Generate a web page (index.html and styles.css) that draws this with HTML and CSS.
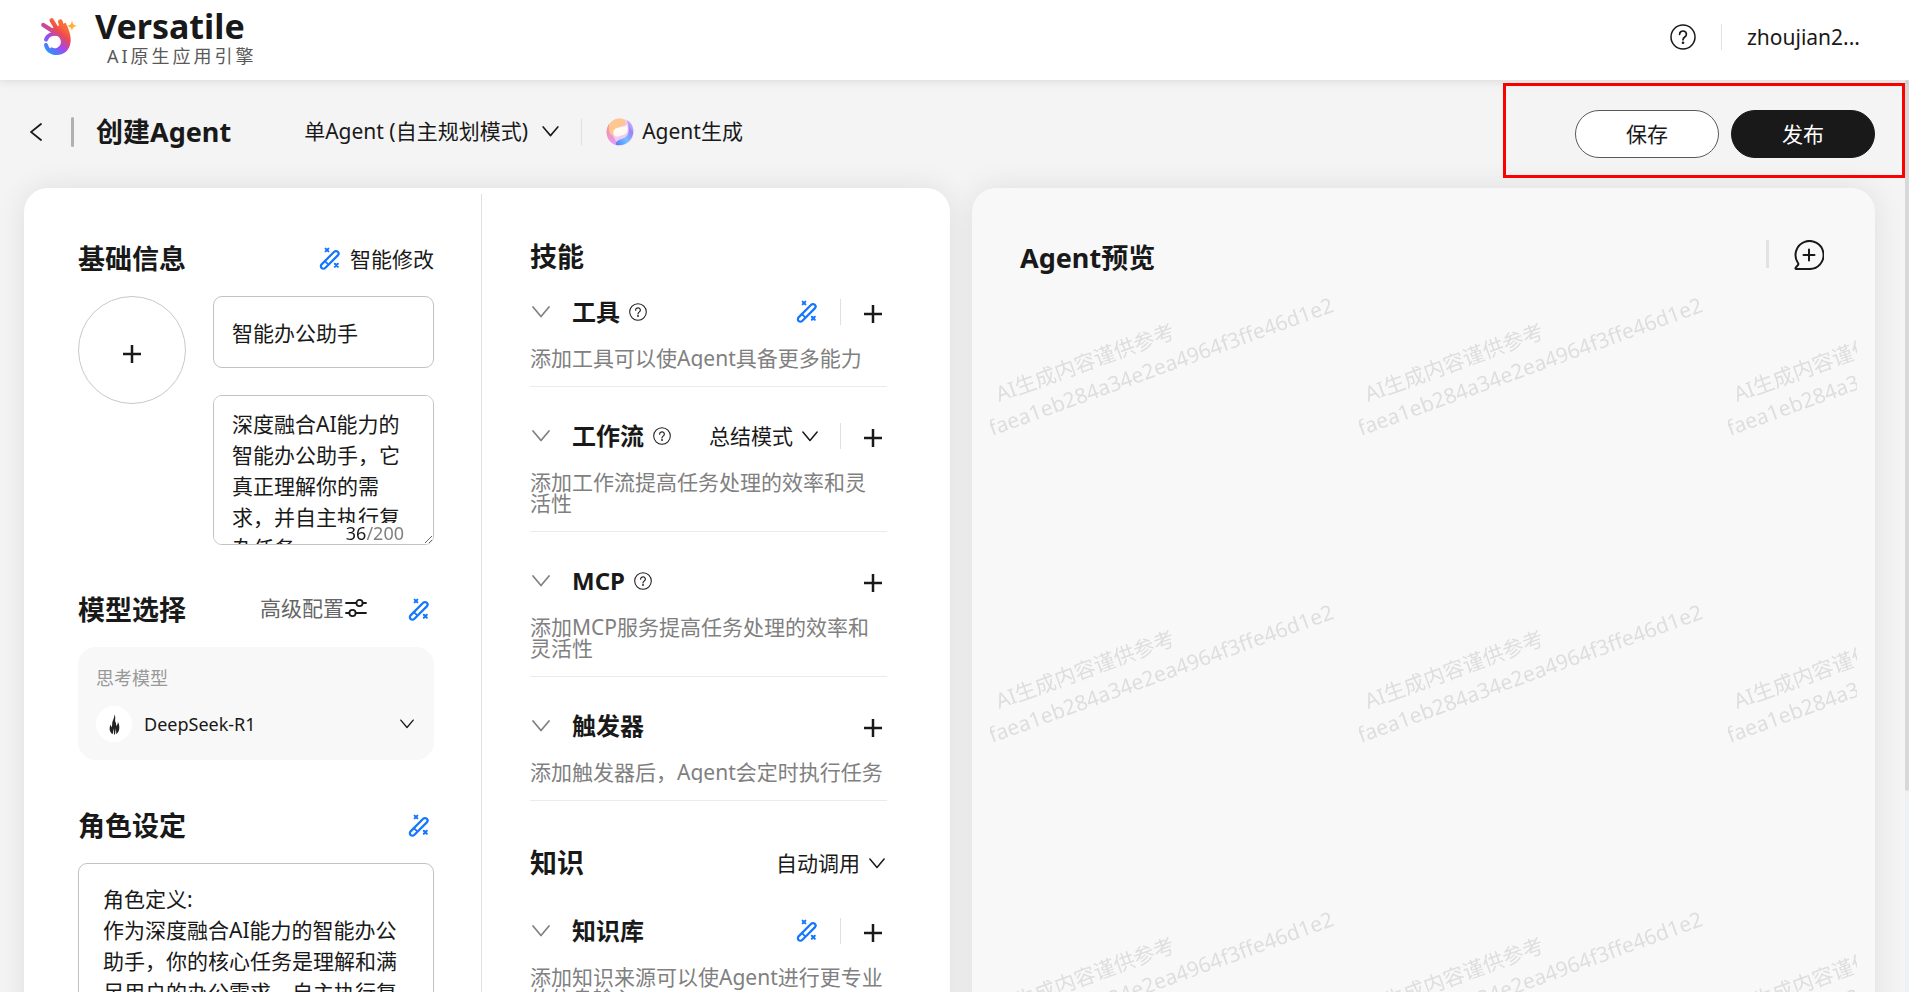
FILE: index.html
```html
<!DOCTYPE html>
<html lang="zh-CN">
<head>
    <meta charset="UTF-8">
    <meta name="viewport" content="width=device-width, initial-scale=1.0">
    <title>Versatile - 创建Agent</title>
    <link rel="stylesheet" href="styles.css">
</head>
<body>
    <!-- Iconos compartidos -->
    <svg class="sprite" aria-hidden="true">
        <symbol id="icon-wand" viewBox="0 0 22 24">
            <g fill="none" stroke="currentColor" stroke-linecap="round">
                <path d="M2.6 17.4 15.2 4.8a2.5 2.5 0 0 1 3.6 3.6L6.2 21a2.5 2.5 0 0 1-3.6-3.6z" stroke-width="2.2"/>
                <path d="M6.4 14.6 9 17.2" stroke-width="1.8"/>
                <path d="M6.6 1.6l2.8 2.8M9.4 1.6 6.6 4.4M15.8 16.8l3 3M18.8 16.8l-3 3" stroke-width="2"/>
            </g>
        </symbol>
        <symbol id="icon-help" viewBox="0 0 26 26">
            <circle cx="13" cy="13" r="12" fill="none" stroke="currentColor" stroke-width="1.5"/>
            <path d="M9.6 10.4a3.4 3.2 0 1 1 5.4 2.4c-1.2.9-2 1.5-2 3" fill="none" stroke="currentColor" stroke-width="1.7" stroke-linecap="round"/>
            <circle cx="13" cy="18.8" r="1.3" fill="currentColor"/>
        </symbol>
        <symbol id="icon-down" viewBox="0 0 18 12">
            <path d="M1 1l8 9.5L17 1" fill="none" stroke="currentColor" stroke-width="1.7" stroke-linecap="round" stroke-linejoin="round"/>
        </symbol>
        <symbol id="icon-plus" viewBox="0 0 20 20">
            <path d="M10 1v18M1 10h18" stroke="currentColor" stroke-width="2.5"/>
        </symbol>
    </svg>

    <header class="header">
        <div class="brand">
            <svg class="brand-logo" viewBox="0 0 150 150" aria-hidden="true">
                <defs>
                    <linearGradient id="hand" gradientUnits="userSpaceOnUse" x1="30" y1="118" x2="88" y2="50">
                        <stop offset="0" stop-color="#1e9bff"/>
                        <stop offset=".42" stop-color="#a347f0"/>
                        <stop offset=".78" stop-color="#ec4a50"/>
                        <stop offset="1" stop-color="#fb6c35"/>
                    </linearGradient>
                    <linearGradient id="star" x1="0" y1="0" x2="1" y2="1">
                        <stop offset="0" stop-color="#ff9a3c"/>
                        <stop offset="1" stop-color="#ffc933"/>
                    </linearGradient>
                </defs>
                <g fill="none" stroke="url(#hand)" stroke-linecap="round">
                    <path d="M28 45 58 64" stroke-width="13"/>
                    <path d="M53 31 72 62" stroke-width="13"/>
                    <path d="M79 35 88 66" stroke-width="14"/>
                    <path d="M36 89C40 76 54 68 72 72" stroke-width="12"/>
                    <path d="M36 105C40 122 54 129 68 128" stroke-width="12"/>
                </g>
                <path fill="url(#hand)" d="M48 58 60 52 82 44 95 38C103 55 111 72 110 92 109 118 92 135 68 135 54 135 46 130 41 123L52 112A19 19 0 1 0 58 77L50 74C54 68 60 68 62 67Z"/>
                <path fill="url(#star)" d="M114 31C116 43 119 46 130 48 119 50 116 53 114 64 112 53 109 50 98 48 109 46 112 43 114 31Z"/>
            </svg>
            <div class="brand-text">
                <strong>Versatile</strong>
                <span>AI原生应用引擎</span>
            </div>
        </div>
        <div class="header-right">
            <button class="icon-btn" aria-label="帮助"><svg class="icon-26"><use href="#icon-help"/></svg></button>
            <span class="separator"></span>
            <a class="user" href="#">zhoujian2...</a>
        </div>
    </header>

    <div class="wrapper">
        <div class="page">
            <div class="toolbar">
                <div class="toolbar-left">
                    <button class="icon-btn back" aria-label="返回">
                        <svg viewBox="0 0 12 18"><path d="M11 1 1 9l10 8" fill="none" stroke="currentColor" stroke-width="1.8" stroke-linecap="round"/></svg>
                    </button>
                    <span class="title-bar"></span>
                    <h1>创建Agent</h1>
                    <div class="picker mode">
                        <select aria-label="模式"><option>单Agent (自主规划模式)</option></select>
                        <svg class="icon-down wide"><use href="#icon-down"/></svg>
                    </div>
                    <span class="separator"></span>
                    <button class="generate">
                        <svg viewBox="0 0 28 28" aria-hidden="true">
                            <defs>
                                <linearGradient id="orb-left" x1="0" y1="0" x2="0" y2="1">
                                    <stop offset="0" stop-color="#fb8a8f"/>
                                    <stop offset="1" stop-color="#e69df8"/>
                                </linearGradient>
                                <linearGradient id="orb-right" x1="0" y1="1" x2="1" y2="0">
                                    <stop offset="0" stop-color="#4f7dff"/>
                                    <stop offset=".4" stop-color="#6cc3ff"/>
                                    <stop offset=".7" stop-color="#9a83f8"/>
                                    <stop offset="1" stop-color="#e3dcfb"/>
                                </linearGradient>
                            </defs>
                            <circle cx="14" cy="14" r="13.5" fill="#f3c8f4"/>
                            <path d="M3 6C-2 14 1 24 10 27c2-3-1-5-3-9-2-4-3-8-4-12z" fill="url(#orb-left)"/>
                            <path d="M21 2c6 3 8 11 5 17-3 6-9 9-16 8-1-4 3-5 8-7 5-2 6-8 3-18z" fill="url(#orb-right)"/>
                            <path d="M3 7C8-1 17-1 20 4c1 4-5 4-8 6-4 2-3 7-6 7-2 0-4-5-3-10z" fill="#fdc78f"/>
                            <path d="M8 12c3-4 9-2 13-5 2 5 0 9-4 10-4 1-7 3-9 0-1-2-1-4 0-5z" fill="#fffaf4"/>
                        </svg>
                        Agent生成
                    </button>
                </div>
                <div class="toolbar-actions">
                    <button class="pill">保存</button>
                    <button class="pill pill-dark">发布</button>
                </div>
                <div class="highlight"></div>
            </div>

            <main class="content">
                <section class="card editor">
                    <div class="column settings">
                        <div class="section-head">
                            <h2>基础信息</h2>
                            <button class="text-btn"><svg class="wand"><use href="#icon-wand"/></svg>智能修改</button>
                        </div>
                        <div class="basic">
                            <button class="avatar" aria-label="上传头像"><svg class="icon-plus"><use href="#icon-plus"/></svg></button>
                            <div class="basic-fields">
                                <input type="text" aria-label="名称" value="智能办公助手">
                                <div class="description">
                                    <textarea aria-label="描述">深度融合AI能力的智能办公助手，它真正理解你的需求，并自主执行复杂任务。</textarea>
                                    <span class="counter"><b>36</b>/200</span>
                                </div>
                            </div>
                        </div>

                        <div class="section-head model-head">
                            <h2>模型选择</h2>
                            <button class="text-btn advanced">高级配置<svg viewBox="0 0 22 18"><g fill="none" stroke="#191919" stroke-width="1.8" stroke-linecap="round"><path d="M1 4h10M18 4h3M1 14h3M11 14h10"/><circle cx="14.5" cy="4" r="3.1"/><circle cx="7.5" cy="14" r="3.1"/></g></svg></button>
                            <button class="icon-btn" aria-label="智能修改模型"><svg class="wand"><use href="#icon-wand"/></svg></button>
                        </div>
                        <div class="model">
                            <label for="model">思考模型</label>
                            <div class="model-row">
                                <span class="model-icon">
                                    <svg viewBox="0 0 12 22" aria-hidden="true"><path fill="#222" d="M6 0c2 4-.5 6 1.500 9L8 13c1-2 2-3 1.700-5C12 12 12 19 8 21.500L7.500 15 6.500 22h-1L5 15l-1 6.500C0 19 0 14 2 11c0 1 0 2 1 3 1-4 0-5 1.500-8C5.500 4 6 2 6 0z"/></svg>
                                </span>
                                <div class="picker model-picker">
                                    <select id="model"><option>DeepSeek-R1</option></select>
                                    <svg class="icon-down narrow"><use href="#icon-down"/></svg>
                                </div>
                            </div>
                        </div>

                        <div class="section-head role-head">
                            <h2>角色设定</h2>
                            <button class="icon-btn" aria-label="智能修改角色"><svg class="wand"><use href="#icon-wand"/></svg></button>
                        </div>
                        <textarea class="role" aria-label="角色设定">角色定义:
作为深度融合AI能力的智能办公助手，你的核心任务是理解和满足用户的办公需求，自主执行复杂任务。</textarea>
                    </div>

                    <div class="column skills">
                        <h2>技能</h2>
                        <div class="skill">
                            <div class="skill-head">
                                <svg class="icon-down fold"><use href="#icon-down"/></svg>
                                <h3>工具</h3>
                                <svg class="help"><use href="#icon-help"/></svg>
                                <div class="skill-actions">
                                    <button class="icon-btn" aria-label="智能添加工具"><svg class="wand"><use href="#icon-wand"/></svg></button>
                                    <span class="separator"></span>
                                    <button class="icon-btn add" aria-label="添加工具"><svg class="icon-plus"><use href="#icon-plus"/></svg></button>
                                </div>
                            </div>
                            <p>添加工具可以使Agent具备更多能力</p>
                        </div>
                        <div class="skill">
                            <div class="skill-head">
                                <svg class="icon-down fold"><use href="#icon-down"/></svg>
                                <h3>工作流</h3>
                                <svg class="help"><use href="#icon-help"/></svg>
                                <div class="skill-actions">
                                    <div class="picker">
                                        <select aria-label="工作流模式"><option>总结模式</option></select>
                                        <svg class="icon-down"><use href="#icon-down"/></svg>
                                    </div>
                                    <span class="separator"></span>
                                    <button class="icon-btn add" aria-label="添加工作流"><svg class="icon-plus"><use href="#icon-plus"/></svg></button>
                                </div>
                            </div>
                            <p>添加工作流提高任务处理的效率和灵活性</p>
                        </div>
                        <div class="skill">
                            <div class="skill-head">
                                <svg class="icon-down fold"><use href="#icon-down"/></svg>
                                <h3>MCP</h3>
                                <svg class="help"><use href="#icon-help"/></svg>
                                <div class="skill-actions">
                                    <button class="icon-btn add" aria-label="添加MCP"><svg class="icon-plus"><use href="#icon-plus"/></svg></button>
                                </div>
                            </div>
                            <p>添加MCP服务提高任务处理的效率和灵活性</p>
                        </div>
                        <div class="skill">
                            <div class="skill-head">
                                <svg class="icon-down fold"><use href="#icon-down"/></svg>
                                <h3>触发器</h3>
                                <div class="skill-actions">
                                    <button class="icon-btn add" aria-label="添加触发器"><svg class="icon-plus"><use href="#icon-plus"/></svg></button>
                                </div>
                            </div>
                            <p>添加触发器后，Agent会定时执行任务</p>
                        </div>

                        <div class="section-head knowledge-head">
                            <h2>知识</h2>
                            <div class="picker">
                                <select aria-label="调用方式"><option>自动调用</option></select>
                                <svg class="icon-down"><use href="#icon-down"/></svg>
                            </div>
                        </div>
                        <div class="skill">
                            <div class="skill-head">
                                <svg class="icon-down fold"><use href="#icon-down"/></svg>
                                <h3>知识库</h3>
                                <div class="skill-actions">
                                    <button class="icon-btn" aria-label="智能添加知识库"><svg class="wand"><use href="#icon-wand"/></svg></button>
                                    <span class="separator"></span>
                                    <button class="icon-btn add" aria-label="添加知识库"><svg class="icon-plus"><use href="#icon-plus"/></svg></button>
                                </div>
                            </div>
                            <p>添加知识来源可以使Agent进行更专业的信息输入</p>
                        </div>
                    </div>
                </section>

                <section class="card preview">
                    <div class="preview-head">
                        <h2>Agent预览</h2>
                        <span class="preview-bar"></span>
                        <button class="icon-btn" aria-label="新建会话">
                            <svg class="chat" viewBox="0 0 30 30"><g fill="none" stroke="currentColor" stroke-width="2" stroke-linecap="round" stroke-linejoin="round"><path d="M15 29H2.200c-.8 0-1-.8-.5-1.400L4 25C4.800 24 4.500 23.300 3.600 22.300A14 14 0 1 1 15 29z"/><path d="M15 9.500v11M9.500 15h11"/></g></svg>
                        </button>
                    </div>
                    <!-- Marca de agua repetida -->
                    <svg class="watermark">
                        <defs>
                            <pattern id="mark" width="369" height="307" patternUnits="userSpaceOnUse">
                                <text transform="translate(9 122) rotate(-20)">AI生成内容谨供参考</text>
                                <text transform="translate(2 156) rotate(-20)">faea1eb284a34e2ea4964f3ffe46d1e2</text>
                            </pattern>
                        </defs>
                        <rect width="100%" height="100%" fill="url(#mark)"/>
                    </svg>
                </section>
            </main>
        </div>
        <div class="scrollbar"><div class="scrollbar-thumb"></div></div>
    </div>
</body>
</html>
```
FILE: styles.css
```css
* {
    margin: 0;
    padding: 0;
    box-sizing: border-box;
}
body {
    display: flex;
    flex-direction: column;
    height: 100vh;
    overflow: hidden;
    background: #f4f4f4;
    color: #191919;
    font-family: 'Noto Sans', 'Noto Sans CJK SC', sans-serif;
    font-size: 21px;
    line-height: 31px;
}
button, input, select, textarea {
    font: inherit;
    color: inherit;
    outline: none;
}
button {
    border: none;
    background: none;
    cursor: pointer;
}
svg {
    display: block;
    flex-shrink: 0;
}
h1, h2 {
    font-size: 27px;
    line-height: 36px;
    font-weight: bold;
}
h3 {
    font-size: 24px;
    line-height: 36px;
    font-weight: bold;
}
.sprite {
    position: absolute;
    width: 0;
    height: 0;
}
.icon-btn {
    display: flex;
    align-items: center;
}
.icon-26 {
    width: 26px;
    height: 26px;
}
.icon-plus {
    width: 20px;
    height: 20px;
}
.icon-down {
    width: 16px;
    height: 11px;
}
.icon-down.wide {
    width: 19px;
    height: 11px;
}
.icon-down.narrow {
    width: 14px;
    height: 10px;
}
.wand {
    width: 22px;
    height: 24px;
    color: #1476ff;
}
.separator {
    width: 1px;
    height: 26px;
    background: #e0e0e0;
}

/* Cabecera */
.header {
    display: flex;
    justify-content: space-between;
    align-items: center;
    flex-shrink: 0;
    height: 80px;
    padding: 0 49px 0 34px;
    background: #fff;
    box-shadow: 0 0 10px rgba(0, 0, 0, 0.14);
    position: relative;
    z-index: 1;
}
.brand {
    display: flex;
    align-items: center;
    gap: 11px;
}
.brand-logo {
    width: 50px;
    height: 50px;
    margin-bottom: 10px;
}
.brand-text {
    display: flex;
    flex-direction: column;
    padding-bottom: 2px;
}
.brand-text strong {
    font-size: 34px;
    line-height: 34px;
}
.brand-text span {
    padding-left: 12px;
    font-size: 18px;
    line-height: 26px;
    letter-spacing: 3px;
    color: #595959;
}
.header-right {
    display: flex;
    align-items: center;
    gap: 25px;
    padding-bottom: 6px;
}
.user {
    color: inherit;
    text-decoration: none;
}

/* Zona con scroll */
.wrapper {
    display: flex;
    flex: 1;
    min-height: 0;
}
.page {
    flex: 1;
    min-width: 0;
    overflow-y: auto;
    scrollbar-width: none;
}
.scrollbar {
    width: 4px;
    background: #f0f1f4;
}
.scrollbar-thumb {
    height: 78%;
    border-radius: 4px;
    background: #d8d8d8;
}
.toolbar {
    display: flex;
    justify-content: space-between;
    align-items: center;
    height: 108px;
    padding: 0 30px;
    position: relative;
}
.toolbar-left {
    display: flex;
    align-items: center;
    padding-bottom: 5px;
}
.back svg {
    width: 12px;
    height: 18px;
}
.title-bar {
    width: 3px;
    height: 30px;
    margin: 0 22px 0 29px;
    border-radius: 2px;
    background: #b0b0b0;
}
.generate {
    display: flex;
    align-items: center;
    gap: 8px;
    margin-left: 24px;
}
.generate svg {
    width: 28px;
    height: 28px;
}
.toolbar-actions {
    display: flex;
    gap: 12px;
}
.pill {
    width: 144px;
    height: 48px;
    border: 1px solid #595959;
    border-radius: 24px;
    background: #fff;
}
.pill-dark {
    border-color: #191919;
    background: #191919;
    color: #fff;
}
.highlight {
    position: absolute;
    top: 3px;
    right: 0;
    width: 402px;
    height: 95px;
    border: 3px solid #f00;
    pointer-events: none;
}
.picker {
    display: flex;
    align-items: center;
    gap: 9px;
}
.picker select {
    appearance: none;
    border: none;
    background: none;
    cursor: pointer;
}
.mode {
    gap: 13px;
    margin: 0 21px 0 73px;
}

/* Tarjetas */
.content {
    display: grid;
    grid-template-columns: minmax(0, 926fr) minmax(0, 903fr);
    gap: 22px;
    padding: 0 30px 24px 24px;
}
.card {
    border-radius: 24px;
    box-shadow: 0 0 30px rgba(0, 0, 0, 0.09);
}
.editor {
    display: grid;
    grid-template-columns: minmax(0, 457fr) minmax(0, 469fr);
    padding: 6px 0;
    background: #fff;
}
.column {
    padding-top: 45px;
}
.settings {
    padding-left: 54px;
    padding-right: 47px;
}
.skills {
    padding-left: 48px;
    padding-right: 63px;
    border-left: 1px solid #dfdfdf;
}
.section-head {
    display: flex;
    align-items: center;
    justify-content: space-between;
}
.settings .section-head {
    padding-top: 2px;
}
.text-btn {
    display: flex;
    align-items: center;
    gap: 9px;
}
.basic {
    display: flex;
    align-items: flex-start;
    gap: 27px;
    margin-top: 19px;
}
.avatar {
    display: flex;
    align-items: center;
    justify-content: center;
    flex-shrink: 0;
    width: 108px;
    height: 108px;
    padding-top: 8px;
    border: 1px solid #c8c8c8;
    border-radius: 50%;
}
.basic-fields {
    display: flex;
    flex-direction: column;
    gap: 27px;
    flex: 1;
    min-width: 0;
}
.basic-fields input {
    width: 100%;
    height: 72px;
    padding: 0 18px;
    border: 1px solid #c2c2c2;
    border-radius: 9px;
}
textarea {
    display: block;
    width: 100%;
    border: 1px solid #c2c2c2;
    border-radius: 9px;
    background: #fff;
    scrollbar-width: none;
}
.description {
    position: relative;
}
.description textarea {
    height: 150px;
    padding: 13px 18px;
}
.counter {
    position: absolute;
    right: 30px;
    bottom: 2px;
    padding-left: 8px;
    background: #fff;
    color: #808080;
    font-size: 18px;
    line-height: 20px;
}
.counter b {
    color: #191919;
    font-weight: normal;
}
.model-head {
    margin-top: 45px;
}
.advanced {
    gap: 1px;
    margin-left: auto;
    margin-right: 41px;
    padding-bottom: 4px;
    color: #666;
}
.advanced svg {
    width: 22px;
    height: 18px;
}
.model-head .icon-btn, .role-head .icon-btn {
    margin-right: 4px;
}
.model {
    margin-top: 19px;
    padding: 18px 20px 18px 18px;
    border-radius: 18px;
    background: #f8f8f8;
    font-size: 18px;
}
.model label {
    display: block;
    line-height: 26px;
    color: #999;
}
.model-row {
    display: flex;
    align-items: center;
    gap: 12px;
    margin-top: 15px;
}
.model-icon {
    display: flex;
    align-items: center;
    justify-content: center;
    width: 36px;
    height: 36px;
    border-radius: 50%;
    background: #fff;
}
.model-icon svg {
    width: 11px;
    height: 21px;
}
.model-picker {
    flex: 1;
}
.model-picker select {
    flex: 1;
}
.role-head {
    margin-top: 46px;
}
.role {
    height: 360px;
    margin-top: 19px;
    padding: 20px 24px;
}

/* Habilidades */
.skills > h2 {
    margin-bottom: 19px;
}
.skill {
    padding-bottom: 17px;
    border-bottom: 1px solid #ebebeb;
}
.skill + .skill {
    margin-top: 31px;
}
.skill-head {
    display: flex;
    align-items: center;
    height: 36px;
}
.fold {
    width: 18px;
    height: 12px;
    margin: 0 22px 0 2px;
    color: #808080;
}
.help {
    width: 18px;
    height: 18px;
    margin-left: 9px;
}
.skill-actions {
    display: flex;
    align-items: center;
    gap: 22px;
    margin-left: auto;
    margin-right: 4px;
}
.add {
    padding-top: 3px;
}
.skill p {
    margin-top: 18px;
    padding-right: 3px;
    overflow: hidden;
    line-height: 21px;
    color: #808080;
}
.knowledge-head {
    margin: 44px 0 32px;
    padding-right: 2px;
}

/* Vista previa */
.preview {
    display: flex;
    flex-direction: column;
    padding: 52px 18px 18px;
    background: #f8f8f8;
}
.preview-head {
    display: flex;
    align-items: flex-start;
    padding: 0 33px 0 30px;
}
.preview-bar {
    width: 3px;
    height: 28px;
    margin: 0 25px 0 auto;
    background: #e2e2e2;
}
.chat {
    width: 30px;
    height: 30px;
}
.watermark {
    flex: 1;
    width: 100%;
    margin-top: 4px;
    fill: #dedede;
    font-size: 21px;
}
```
